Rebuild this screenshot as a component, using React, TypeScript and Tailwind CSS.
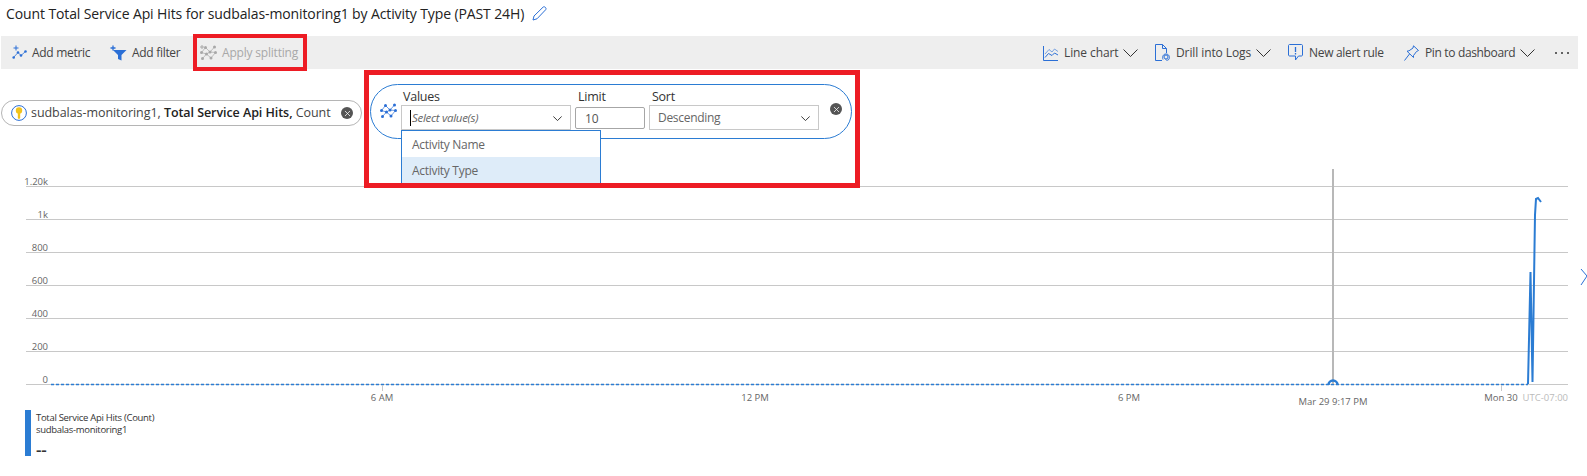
import { X } from 'lucide-react'

const BLUE = '#2b6fd6'

function Chevron({ w = 15, h = 8 }: { w?: number; h?: number }) {
  return (
    <svg width={w} height={h} viewBox="0 0 15 8" fill="none" stroke="#333" strokeWidth={w < 12 ? 1.6 : 1} className="shrink-0">
      <path d="M0.5 0.5L7.5 7.5L14.5 0.5" />
    </svg>
  )
}

function SplitIcon({ color = BLUE, plus = false }: { color?: string; plus?: boolean }) {
  const dots = [[1.5, 7.5], [5.5, 2.5], [10, 7], [14.5, 2], [2.5, 13.5], [6.5, 9], [11, 13], [15.5, 7.5]]
  return (
    <svg width="17" height="16" viewBox="0 0 17 16" className="shrink-0">
      <path d="M1.5 7.5L5.5 2.5L10 7L14.5 2M2.5 13.5L6.5 9L11 13L15.5 7.5M1.5 7.5L6.5 9L10 7L15.5 7.5" fill="none" stroke={color} strokeWidth="0.7" />
      {dots.map(([x, y]) => (
        <circle key={`${x}-${y}`} cx={x} cy={y} r="1.5" fill={color} />
      ))}
      {plus && <path d="M2 0v4M0 2h4" stroke={color} strokeWidth="1" />}
    </svg>
  )
}

function MetricIcon() {
  return (
    <svg width="15" height="15" viewBox="0 0 15 15" className="shrink-0">
      <path d="M1.5 12.5L6 7.5L9 10.5L13.5 6.5" fill="none" stroke={BLUE} strokeWidth="0.8" />
      <circle cx="1.7" cy="12.5" r="1.3" fill={BLUE} />
      <circle cx="6" cy="7.5" r="1.3" fill={BLUE} />
      <circle cx="9" cy="10.5" r="1.3" fill={BLUE} />
      <circle cx="13.5" cy="6.5" r="1.3" fill={BLUE} />
      <path d="M4 0.5v5M1.5 3h5" stroke={BLUE} strokeWidth="1" />
    </svg>
  )
}

function FilterIcon() {
  return (
    <svg width="17" height="16" viewBox="0 0 17 16" className="shrink-0">
      <path d="M3 5H16.5L11.5 10V15.5L8 14V10Z" fill={BLUE} />
      <path d="M3 0.5v5M0.5 3h5" stroke={BLUE} strokeWidth="1.3" />
    </svg>
  )
}

function LineChartIcon() {
  return (
    <svg width="15" height="16" viewBox="0 0 15 16" fill="none" stroke={BLUE} strokeWidth="1" className="shrink-0">
      <path d="M0.5 1V15.5H15" />
      <path d="M2 9L6 4.5L9 7L11.5 4L15 6.5" opacity="0.6" />
      <path d="M2 12.5L5.5 8.5L9 10.5L11.5 8L15 10" />
    </svg>
  )
}

function LogsIcon() {
  return (
    <svg width="15" height="17" viewBox="0 0 15 17" fill="none" stroke={BLUE} strokeWidth="1" className="shrink-0">
      <path d="M7 16.5H0.5V0.5H7.5L11.5 4.5V9" />
      <path d="M7.5 0.5V4.5H11.5" />
      <circle cx="11" cy="13" r="2" />
      <path d="M8 15.5C7 13 8 10 11 10C14 10 15 13 14 15C13.5 16.5 11.5 16.5 10.5 15.5" />
    </svg>
  )
}

function AlertIcon() {
  return (
    <svg width="15" height="17" viewBox="0 0 15 17" fill="none" stroke={BLUE} strokeWidth="1" className="shrink-0">
      <path d="M1.5 0.5H13.5C14 0.5 14.5 1 14.5 1.5V11C14.5 11.5 14 12 13.5 12H10.5L7.5 16V12H1.5C1 12 0.5 11.5 0.5 11V1.5C0.5 1 1 0.5 1.5 0.5Z" />
      <path d="M7.5 3V8M7.5 9V10.5" strokeWidth="1.3" />
    </svg>
  )
}

function PinIcon() {
  return (
    <svg width="15" height="16" viewBox="0 0 15 16" fill="none" stroke={BLUE} strokeWidth="1" className="shrink-0">
      <path d="M9.5 0.8L14.5 5.5L12.5 6.5L9.5 10.5L9.5 12.5L3 6.2L5 5.8L9 3Z" />
      <path d="M5.5 9L0.5 15.5" />
    </svg>
  )
}

function ToolItem({ icon, label, chevron, muted, className, textClass }: { icon: React.ReactNode; label: string; chevron?: boolean; muted?: boolean; className?: string; textClass?: string }) {
  return (
    <div className={`flex items-center shrink-0 ${className ?? ''}`}>
      {icon}
      <span className={`text-[12px] whitespace-nowrap ${textClass ?? 'ml-[5px] tracking-[-0.3px]'} ${muted ? 'text-[#a8a8a8]' : 'text-[#444]'}`}>{label}</span>
      {chevron && <div className="ml-[5px]"><Chevron /></div>}
    </div>
  )
}

function CloseDot() {
  return (
    <div className="w-[12px] h-[12px] rounded-full bg-[#555] flex items-center justify-center shrink-0">
      <X size={9} strokeWidth={2} className="text-white" />
    </div>
  )
}

function Select({ text, italic }: { text: string; italic?: boolean }) {
  return (
    <div className="h-[25px] border border-[#c8c8c8] flex items-center justify-between pl-[8px] pr-[8px] pt-px bg-white">
      <span className={`tracking-[-0.3px] text-[#666] ${italic ? 'italic border-l border-black pl-px leading-[16px] text-[11.5px]' : 'text-[12px]'}`}>{text}</span>
      <Chevron w={9} h={5} />
    </div>
  )
}

const grid = [186, 219, 252, 285, 318, 351]
const yLabels = ['1.20k', '1k', '800', '600', '400', '200']

export default function App() {
  return (
    <div className="relative w-[1587px] h-[476px] overflow-hidden bg-white" style={{ fontFamily: '"Open Sans", "Noto Sans", sans-serif' }}>
      {/* Title */}
      <div className="h-[36px] flex items-center pl-[6px] pb-[9px]">
        <span className="text-[14px] tracking-[-0.11px] text-[#222] whitespace-nowrap">Count Total Service Api Hits for sudbalas-monitoring1 by Activity Type (PAST 24H)</span>
        <svg width="15" height="15" viewBox="0 0 15 15" fill="none" stroke={BLUE} strokeWidth="1" className="ml-[8px]">
          <path d="M1 14L2 10L11 1.2C11.7 0.6 12.6 0.6 13.4 1.4C14.2 2.2 14.2 3 13.6 3.8L5 12.8Z" />
        </svg>
      </div>

      {/* Toolbar */}
      <div className="h-[33px] ml-px mr-[9px] bg-[#eeeeee] flex items-center justify-between">
        <div className="flex items-center pl-[11px]">
          <ToolItem icon={<MetricIcon />} label="Add metric" className="w-[98px]" />
          <ToolItem icon={<FilterIcon />} label="Add filter" className="w-[90px]" />
          <ToolItem icon={<SplitIcon color="#a8a8a8" plus />} label="Apply splitting" muted textClass="ml-[5px] tracking-[-0.2px]" />
        </div>
        <div className="flex items-center pr-[9px]">
          <ToolItem icon={<LineChartIcon />} label="Line chart" chevron className="w-[112px]" textClass="ml-[6px] tracking-[-0.1px]" />
          <ToolItem icon={<LogsIcon />} label="Drill into Logs" chevron className="w-[133px]" textClass="ml-[6px] tracking-[-0.1px]" />
          <ToolItem icon={<AlertIcon />} label="New alert rule" className="w-[116px]" textClass="ml-[6px] tracking-[-0.3px]" />
          <ToolItem icon={<PinIcon />} label="Pin to dashboard" chevron className="w-[151px]" textClass="ml-[6px] tracking-[-0.35px]" />
          <div className="flex gap-[4px]">
            <span className="w-[2px] h-[2px] rounded-full bg-[#333]" />
            <span className="w-[2px] h-[2px] rounded-full bg-[#333]" />
            <span className="w-[2px] h-[2px] rounded-full bg-[#333]" />
          </div>
        </div>
      </div>

      {/* Metric and splitting pills */}
      <div className="flex items-start mt-[15px]">
        <div className="ml-px mt-[16px] w-[361px] h-[26px] rounded-full border border-[#b5b5b5] flex items-center pl-[9px] pr-[8px] shrink-0">
          <svg width="16" height="16" viewBox="0 0 16 16" className="shrink-0">
            <circle cx="8" cy="8" r="7.4" fill="white" stroke={BLUE} />
            <circle cx="8" cy="5.5" r="3.2" fill="#f2c31c" />
            <path d="M6.8 7H9.2V13L8 14.2L6.8 13Z" fill="#f2c31c" />
          </svg>
          <span className="ml-[4px] text-[12.5px] tracking-[-0.06px] text-[#444] whitespace-nowrap">
            sudbalas-monitoring1, <b className="font-semibold text-[#222]">Total Service Api Hits,</b> Count
          </span>
          <div className="ml-auto"><CloseDot /></div>
        </div>

        <div className="ml-[8px] w-[482px] h-[55px] rounded-full border border-[#2b7cd3] flex items-start pl-[8px] shrink-0">
          <div className="mt-[18px] ml-px"><SplitIcon /></div>
          <div className="relative ml-[4px] w-[170px]">
            <div className="h-[20px] pl-[2px] pt-[2px] text-[12.5px] tracking-[-0.25px] text-[#333] leading-[20px]">Values</div>
            <Select text="Select value(s)" italic />
            <div className="absolute z-10 left-0 top-[45px] w-[200px] h-[55px] border-x border-t border-[#2b7cd3] bg-white">
              <div className="h-[26px] pl-[10px] pt-px flex items-center text-[12px] tracking-[-0.3px] text-[#666]">Activity Name</div>
              <div className="h-[29px] pl-[10px] pb-[2px] flex items-center text-[12px] tracking-[-0.3px] text-[#666] bg-[#deecf9]">Activity Type</div>
            </div>
          </div>
          <div className="ml-[4px] w-[70px]">
            <div className="h-[22px] pl-[3px] pt-[2px] text-[12.5px] tracking-[-0.25px] text-[#333] leading-[20px]">Limit</div>
            <div className="h-[22px] border border-[#a6a6a6] rounded-[2px] pl-[9px] pt-[2px] flex items-center text-[12px] text-[#555]">10</div>
          </div>
          <div className="ml-[4px] w-[170px]">
            <div className="h-[20px] pl-[3px] pt-[2px] text-[12.5px] tracking-[-0.25px] text-[#333] leading-[20px]">Sort</div>
            <Select text="Descending" />
          </div>
          <div className="ml-[12px] mt-[18px] -translate-x-px"><CloseDot /></div>
        </div>
      </div>

      {/* Chart */}
      <svg width="1587" height="245" viewBox="0 165 1587 245" className="block mt-[26px]">
        {grid.map((y, i) => (
          <g key={y}>
            <line x1="26" x2="1568" y1={y + 0.5} y2={y + 0.5} stroke="#c8c8c8" />
            <text x="48" y={y - 1} textAnchor="end" fontSize="9.5" fill="#666">{yLabels[i]}</text>
          </g>
        ))}
        <line x1="26" x2="1568" y1="384.5" y2="384.5" stroke="#c8c8c8" />
        <text x="48" y="383" textAnchor="end" fontSize="9.5" fill="#666">0</text>
        <line x1="51" x2="1528" y1="384.5" y2="384.5" stroke="#2b7cd3" strokeWidth="1.3" strokeDasharray="3 2" />

        <line x1="382.5" x2="382.5" y1="385" y2="391" stroke="#c8c8c8" />
        <line x1="1501.5" x2="1501.5" y1="385" y2="391" stroke="#c8c8c8" />
        <text x="382" y="401" textAnchor="middle" fontSize="9.5" fill="#666">6 AM</text>
        <text x="755" y="401" textAnchor="middle" fontSize="9.5" fill="#666">12 PM</text>
        <text x="1129" y="401" textAnchor="middle" fontSize="9.5" fill="#666">6 PM</text>
        <text x="1333" y="405" textAnchor="middle" fontSize="9.5" fill="#666">Mar 29 9:17 PM</text>
        <text x="1501" y="401" textAnchor="middle" fontSize="9.5" fill="#666">Mon 30</text>
        <text x="1568" y="401" textAnchor="end" fontSize="9.5" fill="#bbb">UTC-07:00</text>

        <line x1="1333" x2="1333" y1="169" y2="384" stroke="#b8b8b8" strokeWidth="2" />
        <path d="M1328.5 385A4.5 4.5 0 0 1 1337.5 385" fill="none" stroke="#2b7cd3" strokeWidth="2.5" />
        <path d="M1528 384L1530.5 272L1532.5 382L1535 215L1536 199L1538 198L1541 202" fill="none" stroke="#2b7cd3" strokeWidth="2" />
        <path d="M1581 269L1587 276L1581 285" fill="none" stroke={BLUE} strokeWidth="1" />
      </svg>

      {/* Legend */}
      <div className="flex ml-[25px] h-[46px]">
        <div className="w-[6px] bg-[#2b7cd3]" />
        <div className="ml-[5px] pt-[2px] text-[9.5px] tracking-[-0.3px] leading-[12px] text-[#333]">
          <div>Total Service Api Hits (Count)</div>
          <div>sudbalas-monitoring1</div>
          <div className="mt-[4px] text-[17px] leading-[20px] font-semibold text-[#333]">--</div>
        </div>
      </div>

      {/* Red highlight boxes */}
      <div className="absolute z-20 left-[193px] top-[34px] w-[114px] h-[37px] border-[4px] border-[#ed1c24] pointer-events-none" />
      <div className="absolute z-20 left-[364px] top-[70px] w-[496px] h-[118px] border-[5px] border-[#ed1c24] pointer-events-none" />
    </div>
  )
}
